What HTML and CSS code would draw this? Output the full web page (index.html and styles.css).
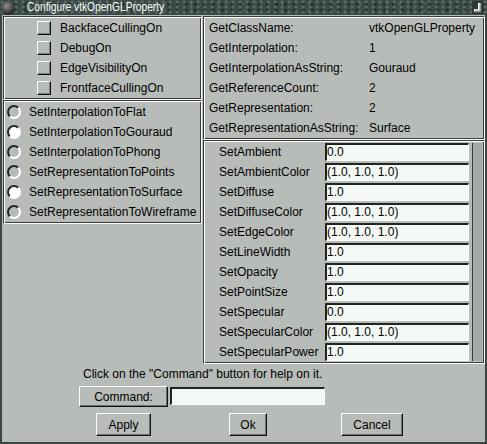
FILE: index.html
```html
<!DOCTYPE html>
<html>
<head>
<meta charset="utf-8">
<link rel="stylesheet" href="styles.css">
</head>
<body>
<div class="win">
  <div class="titlebar">
    <span class="ticon"></span>
    <span class="ttext"><span class="ttextin">Configure vtkOpenGLProperty</span></span>
    <svg class="tbtn" width="11" height="13" viewBox="0 0 11 13">
      <rect x="0" y="0" width="11" height="13" fill="#2e3a38"/>
      <path d="M6 2 H9 V11 H2 V8 H6 Z" fill="#c8ccc8"/>
      <path d="M6 2 H9 V3 H7 V8 H3 V11 H2 V8 H6 Z" fill="#ffffff"/>
      <path d="M9 2 V11 H2" fill="none" stroke="#5a605e" stroke-width="1"/>
    </svg>
  </div>
  <div class="client">
    <div class="panes">
      <div class="leftcol">
        <div class="frame checks">
          <div class="crow"><span class="cbox"></span><span>BackfaceCullingOn</span></div>
          <div class="crow"><span class="cbox"></span><span>DebugOn</span></div>
          <div class="crow"><span class="cbox"></span><span>EdgeVisibilityOn</span></div>
          <div class="crow"><span class="cbox"></span><span>FrontfaceCullingOn</span></div>
        </div>
        <div class="frame radios">
          <div class="rrow"><span class="radio"></span><span>SetInterpolationToFlat</span></div>
          <div class="rrow"><span class="radio on"></span><span>SetInterpolationToGouraud</span></div>
          <div class="rrow"><span class="radio"></span><span>SetInterpolationToPhong</span></div>
          <div class="rrow"><span class="radio"></span><span>SetRepresentationToPoints</span></div>
          <div class="rrow"><span class="radio on"></span><span>SetRepresentationToSurface</span></div>
          <div class="rrow"><span class="radio"></span><span>SetRepresentationToWireframe</span></div>
        </div>
      </div>
      <div class="rightcol">
        <div class="frame info">
          <span>GetClassName:</span><span>vtkOpenGLProperty</span>
          <span>GetInterpolation:</span><span>1</span>
          <span>GetInterpolationAsString:</span><span>Gouraud</span>
          <span>GetReferenceCount:</span><span>2</span>
          <span>GetRepresentation:</span><span>2</span>
          <span>GetRepresentationAsString:</span><span>Surface</span>
        </div>
        <div class="frame settings">
          <div class="canvas">
            <span class="slabel">SetAmbient</span><span class="entry">0.0</span>
            <span class="slabel">SetAmbientColor</span><span class="entry">(1.0, 1.0, 1.0)</span>
            <span class="slabel">SetDiffuse</span><span class="entry">1.0</span>
            <span class="slabel">SetDiffuseColor</span><span class="entry">(1.0, 1.0, 1.0)</span>
            <span class="slabel">SetEdgeColor</span><span class="entry">(1.0, 1.0, 1.0)</span>
            <span class="slabel">SetLineWidth</span><span class="entry">1.0</span>
            <span class="slabel">SetOpacity</span><span class="entry">1.0</span>
            <span class="slabel">SetPointSize</span><span class="entry">1.0</span>
            <span class="slabel">SetSpecular</span><span class="entry">0.0</span>
            <span class="slabel">SetSpecularColor</span><span class="entry">(1.0, 1.0, 1.0)</span>
            <span class="slabel">SetSpecularPower</span><span class="entry">1.0</span>
          </div>
          <div class="stripe"></div>
        </div>
      </div>
    </div>
    <div class="help">Click on the "Command" button for help on it.</div>
    <div class="cmdrow">
      <span class="btn cmdbtn">Command:</span>
      <span class="entry cmdentry"></span>
    </div>
    <div class="btnrow">
      <span class="btn apply">Apply</span>
      <span class="btn ok">Ok</span>
      <span class="btn cancel">Cancel</span>
    </div>
  </div>
</div>
</body>
</html>
```
FILE: styles.css
```css
* { box-sizing: border-box; }
html, body { margin: 0; padding: 0; background: #b8bcb8; }
.win {
  width: 487px;
  height: 444px;
  display: flex;
  flex-direction: column;
  background: #b8bcb8;
  font: 12px "Liberation Sans", Arial, sans-serif;
  color: #000;
}
.titlebar {
  height: 15px;
  display: flex;
  align-items: center;
  background:
    radial-gradient(circle at 30% 40%, rgba(130,150,145,.45) 0 1px, transparent 2px) 0 0/7px 5px,
    radial-gradient(circle at 70% 70%, rgba(15,22,22,.55) 0 1px, transparent 2px) 0 0/9px 6px,
    radial-gradient(circle at 50% 20%, rgba(100,120,115,.35) 0 1px, transparent 2px) 3px 2px/13px 7px,
    #3a4946;
  color: #fff;
}
.ticon {
  width: 14px;
  height: 14px;
  margin-left: 1px;
  border-radius: 50%;
  background: radial-gradient(circle at 40% 35%, #8a8e8c 0, #4a4e4c 45%, #1e2222 75%);
}
.ttext {
  margin-left: 12px;
  flex: 1;
  line-height: 15px;
  white-space: nowrap;
}
.ttextin {
  display: inline-block;
  font-size: 12px;
  transform: scaleX(0.85);
  transform-origin: left center;
}
.tbtn { margin-right: 4px; }
.client {
  flex: 1;
  border: 2px solid #3e4644;
  border-top: 0;
  padding: 1px 0 0 1px;
  display: flex;
  flex-direction: column;
}
.panes {
  display: flex;
  gap: 1px;
  height: 348px;
}
.leftcol { width: 199px; display: flex; flex-direction: column; }
.rightcol { width: 282px; display: flex; flex-direction: column; }
.frame {
  border: 1px solid;
  border-color: #3a3e3a #ffffff #ffffff #3a3e3a;
  box-shadow: inset 1px 1px 0 #ffffff, inset -1px -1px 0 #3a3e3a;
  padding: 1px;
}
.checks { height: 84px; }
.crow {
  height: 20px;
  display: flex;
  align-items: center;
  padding-left: 32px;
}
.cbox {
  width: 14px;
  height: 14px;
  margin-right: 9px;
  border: 1px solid;
  border-color: #ffffff #101410 #101410 #ffffff;
  box-shadow: inset -1px -1px 0 #7a7e7a;
}
.radios { height: 124px; }
.rrow {
  height: 20px;
  display: flex;
  align-items: center;
  padding-left: 2px;
}
.radio {
  width: 14px;
  height: 14px;
  margin-right: 8px;
  border-radius: 50%;
  border: 2px solid;
  border-color: #202420 #ffffff #ffffff #202420;
}
.radio.on { background: #ffffff; }
.info {
  height: 124px;
  display: grid;
  grid-template-columns: 160px 1fr;
  grid-auto-rows: 20px;
  align-items: center;
  padding-left: 5px;
}
.settings {
  height: 224px;
  display: flex;
}
.canvas {
  width: 266px;
  display: grid;
  grid-template-columns: 106px 144px;
  grid-auto-rows: 20px;
  align-items: center;
  padding-left: 14px;
}
.slabel { white-space: nowrap; }
.entry {
  height: 18px;
  background: #f4f8f4;
  border-style: solid;
  border-width: 2px 1px 1px 2px;
  border-color: #202420 #ffffff #ffffff #202420;
  line-height: 15px;
  padding-left: 0;
  white-space: nowrap;
}
.stripe {
  flex: 1;
  margin: 1px;
  background: #a6aaa6;
  border-left: 1px solid #3a3e3a;
}
.help {
  margin: 3px 0 0 80px;
  height: 15px;
  line-height: 15px;
}
.cmdrow {
  margin: 4px 0 0 76px;
  display: flex;
  align-items: flex-start;
  gap: 2px;
}
.btn {
  display: flex;
  align-items: center;
  justify-content: center;
  background: #b8bcb8;
  border: 1px solid;
  border-color: #ffffff #101410 #101410 #ffffff;
  box-shadow: inset -1px -1px 0 #6e726e;
}
.cmdbtn { width: 89px; height: 21px; }
.cmdentry { width: 155px; margin-top: 1px; background: #f4f8f4; }
.btnrow {
  margin: 6px 0 0 58px;
  display: grid;
  grid-template-columns: 125px 124px 124px;
  justify-items: center;
}
.btnrow .btn { height: 23px; }
.apply { width: 55px; }
.ok { width: 38px; }
.cancel { width: 62px; }
```
